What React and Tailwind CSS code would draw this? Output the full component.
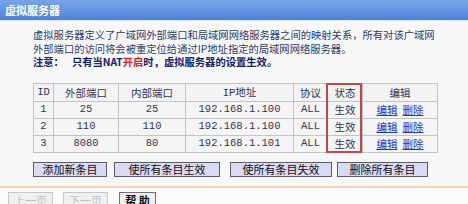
import React from 'react';

const rows = [
  { id: 1, ext: '25', int: '25', ip: '192.168.1.100' },
  { id: 2, ext: '110', int: '110', ip: '192.168.1.100' },
  { id: 3, ext: '8080', int: '80', ip: '192.168.1.101' },
];

const cjk = { fontFamily: '"Noto Sans CJK SC", "Noto Sans", sans-serif' };
const mono = { fontFamily: '"Liberation Mono", "Noto Sans CJK SC", monospace' };

function Btn({ children, className = '' }) {
  return (
    <button
      className={`h-[15px] border border-[#5c5c6c] bg-[#dadaf2] text-[11px] leading-[13px] text-[#111] ${className}`}
    >
      {children}
    </button>
  );
}

export default function App() {
  const th = 'h-[18px] border border-[#c4c4c4] bg-[#f3f3f3] text-center font-normal p-0';
  const td = 'h-[17px] border border-[#c4c4c4] bg-[#f5f5f5] text-center p-0';

  return (
    <div className="h-[204px] w-[468px] overflow-hidden bg-[#f8f8f8] text-[#2b3a67]" style={cjk}>
      <div className="flex h-[20px] items-center bg-gradient-to-b from-[#78a5e8] to-[#4e84d6] pl-[5px] text-[11px] font-bold text-white">
        虚拟服务器
      </div>
      <div className="h-px bg-[#dfe7f5]" />

      <div className="mt-[7px] pl-[33px] text-[10.3px] leading-[13.5px] whitespace-nowrap">
        <div>虚拟服务器定义了广域网外部端口和局域网网络服务器之间的映射关系，所有对该广域网</div>
        <div>外部端口的访问将会被重定位给通过IP地址指定的局域网网络服务器。</div>
        <div className="font-bold text-[#12206a]">
          注意：<span className="ml-[8px]">只有当NAT</span>
          <span className="text-[#e0201a]">开启</span>时，虚拟服务器的设置生效。
        </div>
      </div>

      <div className="relative ml-[33px] mt-[14px] w-[404px]">
        <table className="w-[404px] table-fixed border-collapse text-[10.5px] text-[#333355]">
          <colgroup>
            <col className="w-[20px]" />
            <col className="w-[65px]" />
            <col className="w-[67px]" />
            <col className="w-[108px]" />
            <col className="w-[34px]" />
            <col className="w-[35px]" />
            <col className="w-[75px]" />
          </colgroup>
          <thead>
            <tr>
              <th className={th} style={mono}>ID</th>
              <th className={th}>外部端口</th>
              <th className={th}>内部端口</th>
              <th className={th}><span style={mono}>IP</span>地址</th>
              <th className={th}>协议</th>
              <th className={th}>状态</th>
              <th className={th}>编辑</th>
            </tr>
          </thead>
          <tbody>
            {rows.map((r) => (
              <tr key={r.id}>
                <td className={td} style={mono}>{r.id}</td>
                <td className={td} style={mono}>{r.ext}</td>
                <td className={td} style={mono}>{r.int}</td>
                <td className={td} style={mono}>{r.ip}</td>
                <td className={td} style={mono}>ALL</td>
                <td className={td}>生效</td>
                <td className={td}>
                  <span className="text-[#2233cc] underline">编辑</span>
                  <span className="ml-[5px] text-[#2233cc] underline">删除</span>
                </td>
              </tr>
            ))}
          </tbody>
        </table>
        <div className="pointer-events-none absolute left-[293px] top-0 h-full w-[36px] border-2 border-[#c44545]" />
      </div>

      <div className="mt-[9px] flex pl-[33px]">
        <Btn className="w-[74px]">添加新条目</Btn>
        <Btn className="ml-[7px] w-[106px]">使所有条目生效</Btn>
        <Btn className="ml-[10px] w-[102px]">使所有条目失效</Btn>
        <Btn className="ml-[5px] w-[91px]">删除所有条目</Btn>
      </div>

      <div className="mt-[9px] h-[2px] bg-[#f2d6ae]" />
      <div className="flex bg-[#fbfbfb] pl-[8px] pt-[4px]">
        <button className="h-[16px] w-[45px] border border-[#c8c8cc] bg-[#f0f0f0] text-[11px] leading-[14px] text-[#c2c2c8]">
          上一页
        </button>
        <button className="ml-[10px] h-[16px] w-[45px] border border-[#c8c8cc] bg-[#f0f0f0] text-[11px] leading-[14px] text-[#c2c2c8]">
          下一页
        </button>
        <button className="ml-[11px] h-[16px] w-[37px] border border-[#707078] bg-[#f0f0f0] text-[11px] font-bold leading-[14px] text-[#111]">
          帮 助
        </button>
      </div>
    </div>
  );
}
